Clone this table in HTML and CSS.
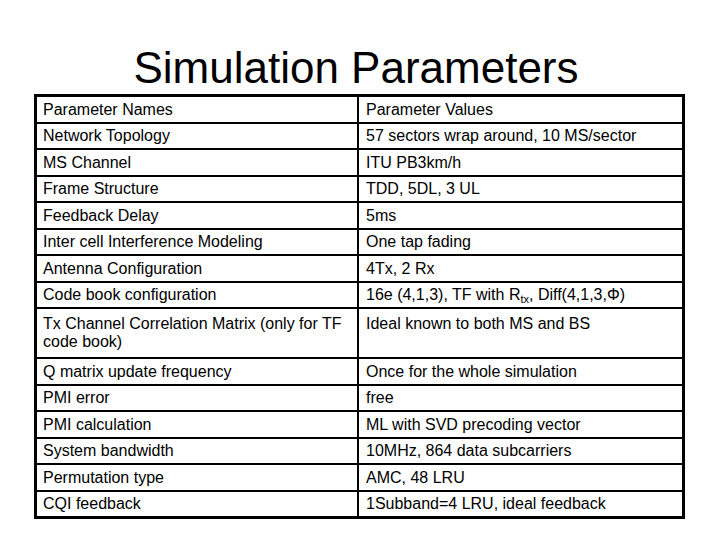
FILE: index.html
```html
<!DOCTYPE html>
<html>
<head>
<meta charset="utf-8">
<link rel="stylesheet" href="styles.css">
</head>
<body>
<div class="slide">
  <h1 class="title">Simulation Parameters</h1>
  <table class="params">
    <tr><td>Parameter Names</td><td>Parameter Values</td></tr>
    <tr><td>Network Topology</td><td>57 sectors wrap around, 10 MS/sector</td></tr>
    <tr><td>MS Channel</td><td>ITU PB3km/h</td></tr>
    <tr><td>Frame Structure</td><td>TDD, 5DL, 3 UL</td></tr>
    <tr><td>Feedback Delay</td><td>5ms</td></tr>
    <tr><td>Inter cell Interference Modeling</td><td>One tap fading</td></tr>
    <tr><td>Antenna Configuration</td><td>4Tx, 2 Rx</td></tr>
    <tr><td>Code book configuration</td><td>16e (4,1,3), TF with R<sub class="sub">tx</sub>, Diff(4,1,3,Φ)</td></tr>
    <tr class="tall"><td>Tx Channel Correlation Matrix (only for TF code book)</td><td>Ideal known to both MS and BS</td></tr>
    <tr><td>Q matrix update frequency</td><td>Once for the whole simulation</td></tr>
    <tr><td>PMI error</td><td>free</td></tr>
    <tr><td>PMI calculation</td><td>ML with SVD precoding vector</td></tr>
    <tr><td>System bandwidth</td><td>10MHz, 864 data subcarriers</td></tr>
    <tr><td>Permutation type</td><td>AMC, 48 LRU</td></tr>
    <tr><td>CQI feedback</td><td>1Subband=4 LRU, ideal feedback</td></tr>
  </table>
</div>
</body>
</html>
```

FILE: styles.css
```css
html, body {
  margin: 0;
  padding: 0;
  background: #ffffff;
}
body {
  width: 720px;
  height: 540px;
  overflow: hidden;
  font-family: "Liberation Sans", Arial, sans-serif;
  color: #000000;
}
.slide {
  padding-left: 34px;
}
.title {
  margin: 0;
  padding: 42px 0 0 0;
  width: 644px;
  height: 51px;
  font-size: 44px;
  font-weight: normal;
  line-height: 51px;
  text-align: center;
}
.params {
  margin-top: 1px;
  width: 651px;
  border: 3px solid #000;
  border-collapse: separate;
  border-spacing: 0;
  table-layout: fixed;
  font-size: 16px;
  line-height: 18px;
}
.params td {
  padding: 3.5px 6px 3px 6px;
  vertical-align: top;
  border-bottom: 2px solid #000;
}
.params td:first-child {
  width: 308px;
  border-right: 2px solid #000;
}
.params td:last-child {
  padding-left: 7px;
}
.params tr:last-child td {
  border-bottom: none;
}
.params tr.tall td {
  padding-top: 6px;
  padding-bottom: 6px;
}
.sub {
  font-size: 11px;
  line-height: 0;
  vertical-align: -3px;
}
```
